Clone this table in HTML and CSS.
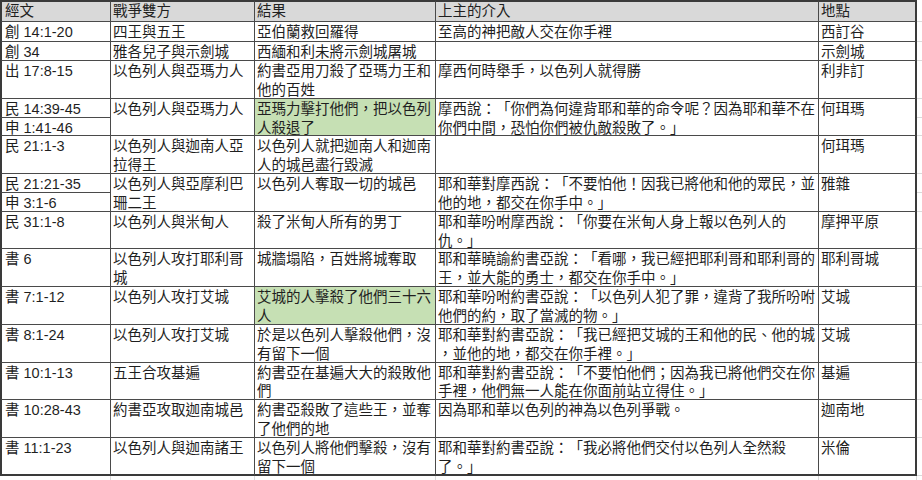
FILE: index.html
```html
<!DOCTYPE html>
<html lang="zh-Hant-TW">
<head>
<meta charset="utf-8">
<title>戰爭表</title>
<link rel="stylesheet" href="styles.css">
</head>
<body>
<div class="sheet">
  <div class="c c1 hd">經文</div>
  <div class="c hd">戰爭雙方</div>
  <div class="c hd">結果</div>
  <div class="c hd">上主的介入</div>
  <div class="c c5 hd">地點</div>
  <div class="g"></div>

  <div class="c c1">創 14:1-20</div>
  <div class="c">四王與五王</div>
  <div class="c">亞伯蘭救回羅得</div>
  <div class="c">至高的神把敵人交在你手裡</div>
  <div class="c c5">西訂谷</div>
  <div class="g"></div>

  <div class="c c1">創 34</div>
  <div class="c">雅各兒子與示劍城</div>
  <div class="c">西緬和利未將示劍城屠城</div>
  <div class="c"></div>
  <div class="c c5">示劍城</div>
  <div class="g"></div>

  <div class="c c1 s2">出 17:8-15</div>
  <div class="c s2">以色列人與亞瑪力人</div>
  <div class="c s2">約書亞用刀殺了亞瑪力王和<br>他的百姓</div>
  <div class="c s2">摩西何時舉手，以色列人就得勝</div>
  <div class="c c5 s2">利非訂</div>
  <div class="g s2"></div>

  <div class="c c1">民 14:39-45</div>
  <div class="c s2">以色列人與亞瑪力人</div>
  <div class="c s2 green">亞瑪力擊打他們，把以色列<br>人殺退了</div>
  <div class="c s2">摩西說：「你們為何違背耶和華的命令呢？因為耶和華不在<br>你們中間，恐怕你們被仇敵殺敗了。」</div>
  <div class="c c5 s2">何珥瑪</div>
  <div class="g"></div>
  <div class="c c1">申 1:41-46</div>
  <div class="g"></div>

  <div class="c c1 s2">民 21:1-3</div>
  <div class="c s2">以色列人與迦南人亞<br>拉得王</div>
  <div class="c s2">以色列人就把迦南人和迦南<br>人的城邑盡行毀滅</div>
  <div class="c s2"></div>
  <div class="c c5 s2">何珥瑪</div>
  <div class="g s2"></div>

  <div class="c c1">民 21:21-35</div>
  <div class="c s2">以色列人與亞摩利巴<br>珊二王</div>
  <div class="c s2">以色列人奪取一切的城邑</div>
  <div class="c s2">耶和華對摩西說：「不要怕他！因我已將他和他的眾民，並<br>他的地，都交在你手中。」</div>
  <div class="c c5 s2">雅雜</div>
  <div class="g"></div>
  <div class="c c1">申 3:1-6</div>
  <div class="g"></div>

  <div class="c c1 s2">民 31:1-8</div>
  <div class="c s2">以色列人與米甸人</div>
  <div class="c s2">殺了米甸人所有的男丁</div>
  <div class="c s2">耶和華吩咐摩西說：「你要在米甸人身上報以色列人的<br>仇。」</div>
  <div class="c c5 s2">摩押平原</div>
  <div class="g s2"></div>

  <div class="c c1 s2">書 6</div>
  <div class="c s2">以色列人攻打耶利哥<br>城</div>
  <div class="c s2">城牆塌陷，百姓將城奪取</div>
  <div class="c s2">耶和華曉諭約書亞說：「看哪，我已經把耶利哥和耶利哥的<br>王，並大能的勇士，都交在你手中。」</div>
  <div class="c c5 s2">耶利哥城</div>
  <div class="g s2"></div>

  <div class="c c1 s2">書 7:1-12</div>
  <div class="c s2">以色列人攻打艾城</div>
  <div class="c s2 green">艾城的人擊殺了他們三十六<br>人</div>
  <div class="c s2">耶和華吩咐約書亞說：「以色列人犯了罪，違背了我所吩咐<br>他們的約，取了當滅的物。」</div>
  <div class="c c5 s2">艾城</div>
  <div class="g s2"></div>

  <div class="c c1 s2">書 8:1-24</div>
  <div class="c s2">以色列人攻打艾城</div>
  <div class="c s2">於是以色列人擊殺他們，沒<br>有留下一個</div>
  <div class="c s2">耶和華對約書亞說：「我已經把艾城的王和他的民、他的城<br>，並他的地，都交在你手裡。」</div>
  <div class="c c5 s2">艾城</div>
  <div class="g s2"></div>

  <div class="c c1 s2">書 10:1-13</div>
  <div class="c s2">五王合攻基遍</div>
  <div class="c s2">約書亞在基遍大大的殺敗他<br>們</div>
  <div class="c s2">耶和華對約書亞說：「不要怕他們；因為我已將他們交在你<br>手裡，他們無一人能在你面前站立得住。」</div>
  <div class="c c5 s2">基遍</div>
  <div class="g s2"></div>

  <div class="c c1 s2">書 10:28-43</div>
  <div class="c s2">約書亞攻取迦南城邑</div>
  <div class="c s2">約書亞殺敗了這些王，並奪<br>了他們的地</div>
  <div class="c s2">因為耶和華以色列的神為以色列爭戰。</div>
  <div class="c c5 s2">迦南地</div>
  <div class="g s2"></div>

  <div class="c c1 s2 last">書 11:1-23</div>
  <div class="c s2 last">以色列人與迦南諸王</div>
  <div class="c s2 last">以色列人將他們擊殺，沒有<br>留下一個</div>
  <div class="c s2 last">耶和華對約書亞說：「我必將他們交付以色列人全然殺<br>了。」</div>
  <div class="c c5 s2 last">米倫</div>
  <div class="g s2"></div>

  <div class="gb"></div>
  <div class="gb"></div>
  <div class="gb"></div>
  <div class="gb"></div>
  <div class="gb"></div>
  <div class="gb end"></div>
</div>
</body>
</html>
```

FILE: styles.css
```css
html, body {
  margin: 0;
  padding: 0;
  background: #ffffff;
  overflow: hidden;
}

.sheet {
  display: grid;
  grid-template-columns: 111px 144px 181px 383px 98px 5px;
  grid-template-rows: 22px 20px 19px repeat(22, 18.85px) 4px;
  font-family: "Liberation Sans", "Noto Sans CJK TC", sans-serif;
  font-size: 14.5px;
  line-height: 18.85px;
  color: #1f1f1f;
  text-spacing-trim: space-all;
}

.c {
  box-sizing: border-box;
  border-right: 1px solid #4a4a4a;
  border-bottom: 1px solid #4a4a4a;
  padding: 1px 0 0 2px;
  white-space: nowrap;
  overflow: visible;
}

.c1 {
  border-left: 2px solid #3a3a3a;
  padding-left: 3px;
}

.c5 {
  border-right: 2px solid #3a3a3a;
}

.hd {
  background: #d9d9d9;
  border-top: 2px solid #3a3a3a;
  padding-top: 0;
}

.s2 {
  grid-row: span 2;
}

.green {
  background: #c6e0b4;
}

.last {
  border-bottom: 2px solid #3a3a3a;
}

.g {
  box-sizing: border-box;
  border-bottom: 1px solid #dadada;
}

.gb {
  box-sizing: border-box;
  border-right: 1px solid #dadada;
}

.gb.end {
  border-right: none;
}
```
